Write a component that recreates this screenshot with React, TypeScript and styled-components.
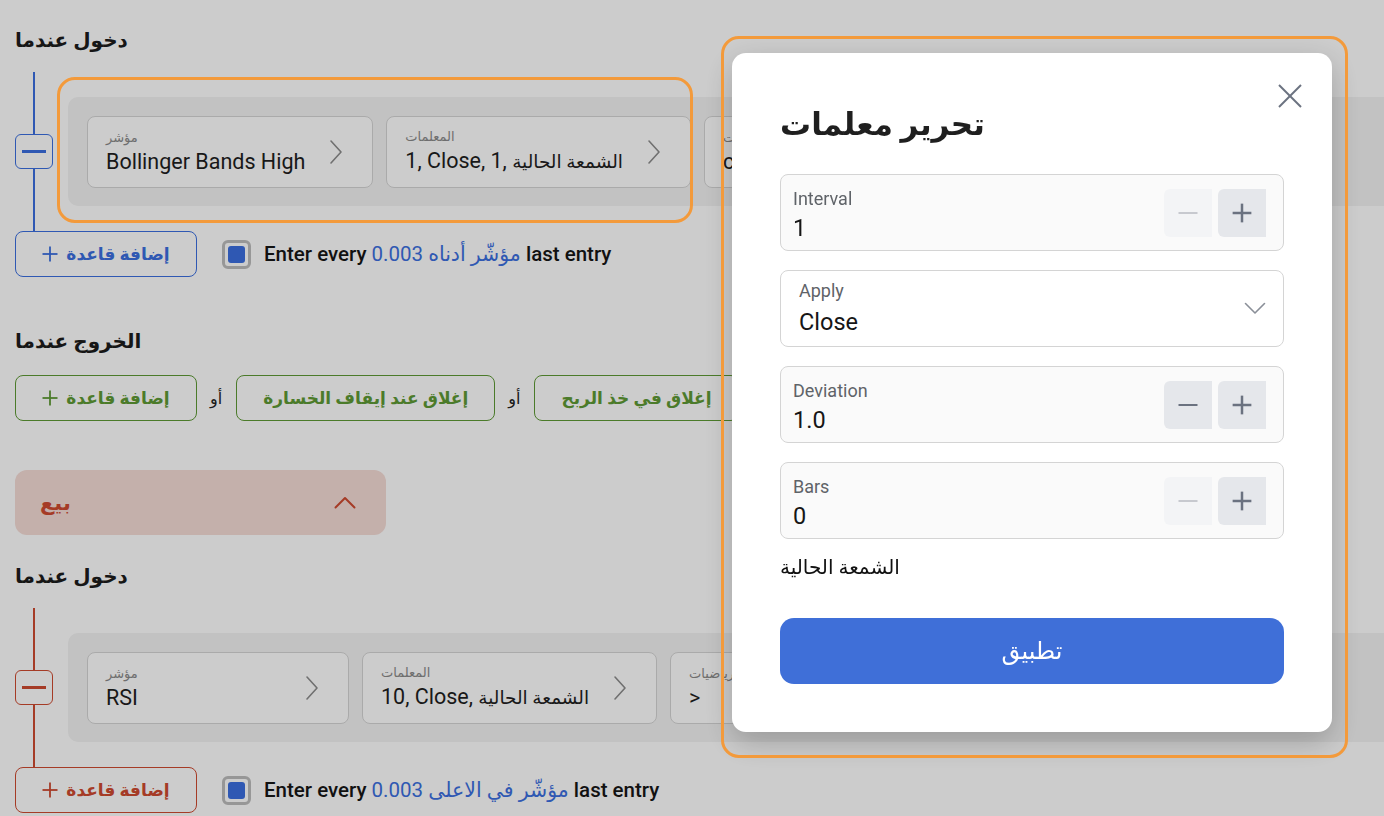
import React from 'react';
import styled, { createGlobalStyle } from 'styled-components';

type Tone = 'blue' | 'green' | 'red';

const toneColor: Record<Tone, string> = {
  blue: '#3b6fe0',
  green: '#5e9a35',
  red: '#cf4a30',
};

const GlobalStyle = createGlobalStyle`
  html, body {
    margin: 0;
    background: #ffffff;
    font-family: Roboto, "DejaVu Sans", sans-serif;
    color: #1c1c1c;
  }
`;

const Page = styled.main`
  width: 1384px;
  height: 816px;
  box-sizing: border-box;
  padding: 26px 0 0 15px;
  display: flex;
  flex-direction: column;
  overflow: hidden;
`;

const Heading = styled.h2<{ $top?: number }>`
  margin: ${(p) => p.$top ?? 0}px 0 0 0;
  font-size: 20px;
  font-weight: 700;
  line-height: 28px;
  color: #1c1c1c;
`;

const RuleGroup = styled.div`
  display: flex;
  align-items: center;
  height: 159px;
  margin-top: 18px;
`;

const Rail = styled.div`
  width: 38px;
  align-self: stretch;
  display: flex;
  flex-direction: column;
  align-items: center;
`;

const RailLine = styled.div<{ $tone: Tone }>`
  width: 2px;
  flex: 1;
  background: ${(p) => toneColor[p.$tone]};
`;

const MinusBox = styled.div<{ $tone: Tone }>`
  width: 38px;
  height: 35px;
  box-sizing: border-box;
  border: 1px solid ${(p) => toneColor[p.$tone]};
  border-radius: 6px;
  background: #ffffff;
  display: flex;
  align-items: center;
  justify-content: center;

  &::after {
    content: '';
    width: 24px;
    height: 3px;
    background: ${(p) => toneColor[p.$tone]};
  }
`;

const ConditionRow = styled.div`
  flex: 1;
  height: 109px;
  margin-left: 15px;
  box-sizing: border-box;
  padding: 0 19px;
  background: #f3f3f3;
  border-radius: 10px 0 0 10px;
  display: flex;
  align-items: center;
  gap: 13px;
  overflow: hidden;
`;

const Card = styled.div`
  flex: none;
  min-width: 262px;
  height: 72px;
  box-sizing: border-box;
  padding: 0 29px 0 18px;
  border: 1px solid #d5d5d5;
  border-radius: 8px;
  background: #ffffff;
  display: flex;
  align-items: center;
  gap: 24px;
`;

const CardText = styled.div`
  flex: 1;
  display: flex;
  flex-direction: column;
  gap: 1px;
`;

const CardLabel = styled.span`
  font-size: 13px;
  line-height: 18px;
  color: #8a8a8a;
`;

const CardValue = styled.span`
  font-size: 21.5px;
  line-height: 27px;
  color: #1e1e1e;
  white-space: nowrap;
`;

const ArabicPart = styled.span`
  font-size: 0.86em;
`;

const ActionRow = styled.div<{ $top?: number }>`
  display: flex;
  align-items: center;
  height: 46px;
  margin-top: ${(p) => p.$top ?? 0}px;
`;

const OutlineButton = styled.button<{ $tone: Tone; $fixed?: boolean }>`
  height: 46px;
  box-sizing: border-box;
  ${(p) => (p.$fixed ? 'width: 182px;' : 'padding: 0 26px;')}
  flex: none;
  border: 1px solid ${(p) => toneColor[p.$tone]};
  border-radius: 8px;
  background: #ffffff;
  color: ${(p) => toneColor[p.$tone]};
  font-family: inherit;
  font-size: 17px;
  font-weight: 700;
  display: inline-flex;
  align-items: center;
  justify-content: center;
  gap: 8px;
  white-space: nowrap;
`;

const OrText = styled.span`
  margin: 0 14px 0 13px;
  font-size: 16px;
  color: #222;
`;

const CheckBox = styled.span`
  margin-left: 25px;
  width: 29px;
  height: 29px;
  box-sizing: border-box;
  border: 3px solid #bdbdbd;
  border-radius: 6px;
  padding: 3px;
  background: #ffffff;
  display: flex;

  &::after {
    content: '';
    flex: 1;
    border-radius: 3px;
    background: #3b6fe0;
  }
`;

const EntryText = styled.span`
  margin-left: 13px;
  font-size: 20.5px;
  font-weight: 500;
  color: #161616;
  white-space: nowrap;
`;

const Accent = styled.span`
  color: #3b6fe0;
  font-weight: 400;
`;

const SellBar = styled.div`
  margin-top: 49px;
  width: 371px;
  height: 65px;
  box-sizing: border-box;
  padding: 0 30px 0 25px;
  border-radius: 12px;
  background: #f5dcd6;
  color: #cf4a30;
  font-size: 21px;
  font-weight: 700;
  display: flex;
  align-items: center;
  justify-content: space-between;
`;

/* modal */

const Overlay = styled.div`
  position: fixed;
  inset: 0;
  background: rgba(0, 0, 0, 0.2);
  display: flex;
  justify-content: flex-end;
  align-items: flex-start;
  padding: 53px 52px 0 0;
`;

const Dialog = styled.section`
  position: relative;
  width: 600px;
  box-sizing: border-box;
  padding: 52px 48px 48px;
  background: #ffffff;
  border-radius: 14px;
  box-shadow: 0 10px 30px rgba(0, 0, 0, 0.22);
`;

const CloseButton = styled.button`
  position: absolute;
  top: 31px;
  right: 30px;
  width: 24px;
  height: 24px;
  padding: 0;
  border: none;
  background: none;
  display: flex;
`;

const DialogTitle = styled.h1`
  margin: 0;
  font-size: 31px;
  font-weight: 700;
  line-height: 40px;
  color: #1f1f1f;
`;

const Fields = styled.div`
  margin-top: 29px;
  display: flex;
  flex-direction: column;
  gap: 19px;
`;

const Field = styled.div<{ $select?: boolean }>`
  height: 77px;
  box-sizing: border-box;
  padding: 0 17px 0 ${(p) => (p.$select ? 18 : 12)}px;
  border: 1px solid #d4d4d4;
  border-radius: 8px;
  background: ${(p) => (p.$select ? '#ffffff' : '#fafafa')};
  display: flex;
  align-items: center;
`;

const FieldText = styled.div<{ $select?: boolean }>`
  flex: 1;
  padding-top: ${(p) => (p.$select ? 0 : 6)}px;
  display: flex;
  flex-direction: column;
  gap: ${(p) => (p.$select ? 5 : 3)}px;
`;

const FieldLabel = styled.span`
  font-size: 18px;
  line-height: 22px;
  color: #5f6368;
`;

const FieldValue = styled.span`
  font-size: 23.5px;
  line-height: 30px;
  color: #161616;
`;

const Steppers = styled.div`
  display: flex;
  gap: 6px;
`;

const StepButton = styled.button<{ $disabled?: boolean }>`
  width: 48px;
  height: 48px;
  padding: 0;
  border: none;
  border-radius: 6px 0 0 6px;
  background: ${(p) => (p.$disabled ? '#f3f4f6' : '#e5e7eb')};
  color: ${(p) => (p.$disabled ? '#c7c9cf' : '#6b7280')};
  display: flex;
  align-items: center;
  justify-content: center;
`;

const Note = styled.p`
  margin: 16px 0 0 0;
  font-size: 20px;
  line-height: 24px;
  color: #111;
`;

const ApplyButton = styled.button`
  margin-top: 39px;
  width: 100%;
  height: 66px;
  border: none;
  border-radius: 14px;
  background: #3f6fd8;
  color: #ffffff;
  font-family: inherit;
  font-size: 24px;
  font-weight: 500;
`;

const Highlight = styled.div<{ $x: number; $y: number; $w: number; $h: number }>`
  position: fixed;
  left: ${(p) => p.$x}px;
  top: ${(p) => p.$y}px;
  width: ${(p) => p.$w}px;
  height: ${(p) => p.$h}px;
  box-sizing: border-box;
  border: 3px solid #f39a3b;
  border-radius: 18px;
  pointer-events: none;
`;

/* icons */

const ChevronRight = () => (
  <svg width="14" height="26" viewBox="0 0 14 26" fill="none">
    <polyline points="2,2 12,13 2,24" stroke="#8d8d8d" strokeWidth="1.6" strokeLinecap="round" strokeLinejoin="round" />
  </svg>
);

const ChevronUp = () => (
  <svg width="22" height="13" viewBox="0 0 22 13" fill="none">
    <polyline points="1.5,11.5 11,2 20.5,11.5" stroke="#cf4a30" strokeWidth="2" strokeLinecap="round" strokeLinejoin="round" />
  </svg>
);

const ChevronDown = () => (
  <svg width="22" height="13" viewBox="0 0 22 13" fill="none">
    <polyline points="1.5,1.5 11,11 20.5,1.5" stroke="#8a8f98" strokeWidth="1.6" strokeLinecap="round" strokeLinejoin="round" />
  </svg>
);

const PlusIcon = ({ size = 16, width = 1.8 }: { size?: number; width?: number }) => (
  <svg width={size} height={size} viewBox="0 0 16 16" fill="none">
    <line x1="8" y1="0.5" x2="8" y2="15.5" stroke="currentColor" strokeWidth={width} />
    <line x1="0.5" y1="8" x2="15.5" y2="8" stroke="currentColor" strokeWidth={width} />
  </svg>
);

const MinusIcon = () => (
  <svg width="20" height="20" viewBox="0 0 20 20" fill="none">
    <line x1="0.5" y1="10" x2="19.5" y2="10" stroke="currentColor" strokeWidth="2" />
  </svg>
);

const CloseIcon = () => (
  <svg width="24" height="24" viewBox="0 0 24 24" fill="none">
    <line x1="1" y1="1" x2="23" y2="23" stroke="#6b7280" strokeWidth="2" />
    <line x1="23" y1="1" x2="1" y2="23" stroke="#6b7280" strokeWidth="2" />
  </svg>
);

interface CondCard {
  label: string;
  value: string;
  candle?: string;
}

const RuleBlock: React.FC<{ tone: Tone; cards: CondCard[]; entry: string }> = ({ tone, cards, entry }) => (
  <>
    <RuleGroup>
      <Rail>
        <RailLine $tone={tone} />
        <MinusBox $tone={tone} />
        <RailLine $tone={tone} />
      </Rail>
      <ConditionRow>
        {cards.map((c) => (
          <Card key={c.label + c.value}>
            <CardText>
              <CardLabel>{c.label}</CardLabel>
              <CardValue>
                {c.value}
                {c.candle && <ArabicPart>{c.candle}</ArabicPart>}
              </CardValue>
            </CardText>
            <ChevronRight />
          </Card>
        ))}
      </ConditionRow>
    </RuleGroup>
    <ActionRow>
      <OutlineButton $tone={tone} $fixed>
        <PlusIcon />
        إضافة قاعدة
      </OutlineButton>
      <CheckBox />
      <EntryText>
        Enter every <Accent>0.003 {entry}</Accent> last entry
      </EntryText>
    </ActionRow>
  </>
);

const NumberField: React.FC<{ label: string; value: string; minusOff?: boolean }> = ({ label, value, minusOff }) => (
  <Field>
    <FieldText>
      <FieldLabel>{label}</FieldLabel>
      <FieldValue>{value}</FieldValue>
    </FieldText>
    <Steppers>
      <StepButton $disabled={minusOff}>
        <MinusIcon />
      </StepButton>
      <StepButton>
        <PlusIcon size={20} width={2} />
      </StepButton>
    </Steppers>
  </Field>
);

export default function App() {
  return (
    <>
      <GlobalStyle />
      <Page>
        <Heading>دخول عندما</Heading>
        <RuleBlock
          tone="blue"
          entry="مؤشّر أدناه"
          cards={[
            { label: 'مؤشر', value: 'Bollinger Bands High' },
            { label: 'المعلمات', value: '1, Close, 1, ', candle: 'الشمعة الحالية' },
            { label: 'رياضيات', value: 'crosses above' },
          ]}
        />

        <Heading $top={50}>الخروج عندما</Heading>
        <ActionRow $top={20}>
          <OutlineButton $tone="green" $fixed>
            <PlusIcon />
            إضافة قاعدة
          </OutlineButton>
          <OrText>أو</OrText>
          <OutlineButton $tone="green">إغلاق عند إيقاف الخسارة</OutlineButton>
          <OrText>أو</OrText>
          <OutlineButton $tone="green">إغلاق في خذ الربح</OutlineButton>
        </ActionRow>

        <SellBar>
          <span>بيع</span>
          <ChevronUp />
        </SellBar>

        <Heading $top={27}>دخول عندما</Heading>
        <RuleBlock
          tone="red"
          entry="مؤشّر في الاعلى"
          cards={[
            { label: 'مؤشر', value: 'RSI' },
            { label: 'المعلمات', value: '10, Close, ', candle: 'الشمعة الحالية' },
            { label: 'رياضيات', value: '>' },
          ]}
        />
      </Page>

      <Overlay>
        <Dialog>
          <CloseButton aria-label="close">
            <CloseIcon />
          </CloseButton>
          <DialogTitle>تحرير معلمات</DialogTitle>
          <Fields>
            <NumberField label="Interval" value="1" minusOff />
            <Field $select>
              <FieldText $select>
                <FieldLabel>Apply</FieldLabel>
                <FieldValue>Close</FieldValue>
              </FieldText>
              <ChevronDown />
            </Field>
            <NumberField label="Deviation" value="1.0" />
            <NumberField label="Bars" value="0" minusOff />
          </Fields>
          <Note>الشمعة الحالية</Note>
          <ApplyButton>تطبيق</ApplyButton>
        </Dialog>
      </Overlay>

      <Highlight $x={57} $y={77} $w={636} $h={146} />
      <Highlight $x={721} $y={36} $w={627} $h={722} />
    </>
  );
}
